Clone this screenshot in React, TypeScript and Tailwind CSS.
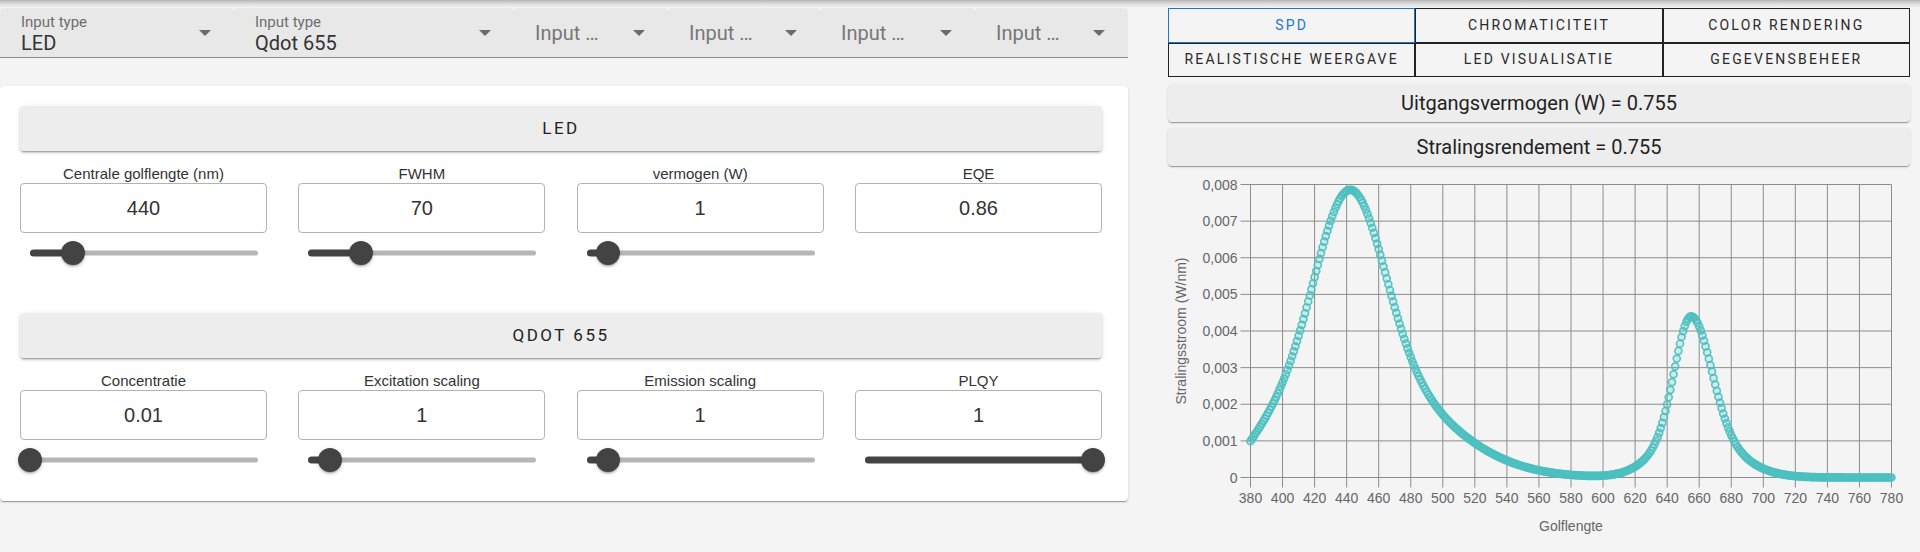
import React from 'react';

const selects = [
  { w: 'w-[234px]', label: 'Input type', value: 'LED' },
  { w: 'w-[280px]', label: 'Input type', value: 'Qdot 655' },
  { w: 'w-[154px]' },
  { w: 'w-[152px]' },
  { w: 'w-[155px]' },
  { w: 'w-[153px]' },
];

const tabs = ['SPD', 'CHROMATICITEIT', 'COLOR RENDERING', 'REALISTISCHE WEERGAVE', 'LED VISUALISATIE', 'GEGEVENSBEHEER'];

interface Field {
  label: string;
  value: string;
  slider?: number;
}

const ledFields: Field[] = [
  { label: 'Centrale golflengte (nm)', value: '440', slider: 19 },
  { label: 'FWHM', value: '70', slider: 23 },
  { label: 'vermogen (W)', value: '1', slider: 9.5 },
  { label: 'EQE', value: '0.86' },
];

const qdotFields: Field[] = [
  { label: 'Concentratie', value: '0.01', slider: 0 },
  { label: 'Excitation scaling', value: '1', slider: 9.6 },
  { label: 'Emission scaling', value: '1', slider: 9.5 },
  { label: 'PLQY', value: '1', slider: 100 },
];

function Arrow() {
  return (
    <svg width="12" height="6" viewBox="0 0 12 6" className="shrink-0">
      <path d="M0 0 L12 0 L6 6 Z" fill="#6b6b6b" />
    </svg>
  );
}

function Slider({ pct }: { pct: number }) {
  return (
    <div className="relative ml-[10px] w-[228px] h-[24px]">
      <div className="absolute left-0 right-0 top-1/2 -translate-y-1/2 h-[5px] rounded-full bg-[#b6b6b6]" />
      <div
        className="absolute left-0 top-1/2 -translate-y-1/2 h-[7px] rounded-full bg-[#434343]"
        style={{ width: `${pct}%` }}
      />
      <div
        className="absolute top-1/2 w-[24px] h-[24px] -translate-x-1/2 -translate-y-1/2 rounded-full bg-[#434343] shadow-[0_3px_1px_-2px_rgba(0,0,0,0.2),0_2px_2px_0_rgba(0,0,0,0.14),0_1px_5px_0_rgba(0,0,0,0.12)]"
        style={{ left: `${pct}%` }}
      />
    </div>
  );
}

function Section({ title, fields }: { title: string; fields: Field[] }) {
  return (
    <div>
      <div className="h-[45px] flex items-center justify-center rounded-[4px] bg-[#ededed] shadow-[0_3px_1px_-2px_rgba(0,0,0,0.2),0_2px_2px_0_rgba(0,0,0,0.14),0_1px_5px_0_rgba(0,0,0,0.12)] font-['Roboto'] text-[17px] tracking-[2.5px] text-[#222]">
        {title}
      </div>
      <div className="flex justify-between mt-[13.5px]">
        {fields.map((f) => (
          <div key={f.label} className="w-[247px]">
            <div className="text-center text-[15px] leading-[17px] text-[#333] font-['Liberation_Sans',Arial,sans-serif]">
              {f.label}
            </div>
            <input
              readOnly
              value={f.value}
              className="mt-[1.5px] w-[247px] h-[50px] border border-[#b3b3b3] rounded-[4px] bg-white text-center text-[20px] text-[#333] font-['Liberation_Sans',Arial,sans-serif] outline-none"
            />
            <div className="mt-[8px] h-[24px]">{f.slider !== undefined && <Slider pct={f.slider} />}</div>
          </div>
        ))}
      </div>
    </div>
  );
}

// spectrum chart
const L = 82.5;
const R = 723.5;
const T = 18.5;
const B = 311.5;
const xs = (l: number) => L + ((l - 380) / 400) * (R - L);
const ys = (v: number) => B - (v / 0.008) * (B - T);

function spd(l: number) {
  const d = l - 442;
  const led =
    0.0079 *
    (0.6 * Math.exp((-d * d) / (2 * 21 * 21)) + 0.4 * Math.exp((-d * d) / (2 * 50 * 50))) *
    (1 - 0.35 * Math.exp(-(l - 380) / 15));
  let q = l - 655;
  if (q > 0) q *= 0.82;
  const qd = 0.0044 * (0.7 * Math.exp((-q * q) / (2 * 10 * 10)) + 0.3 * Math.exp((-q * q) / (2 * 20 * 20)));
  return led + qd;
}

const points = Array.from({ length: 401 }, (_, i) => 380 + i);
const xTicks = Array.from({ length: 21 }, (_, i) => 380 + i * 20);
const yTicks = Array.from({ length: 9 }, (_, i) => i);

function Chart() {
  return (
    <svg width="742" height="386" className="block font-['Liberation_Sans',Arial,sans-serif]">
      {xTicks.map((t) => (
        <line key={'x' + t} x1={xs(t)} x2={xs(t)} y1={T} y2={B + 10} stroke="#8c8c8c" strokeWidth="1" />
      ))}
      {yTicks.map((t) => (
        <line key={'y' + t} x1={L - 10} x2={R} y1={ys(t / 1000)} y2={ys(t / 1000)} stroke="#8c8c8c" strokeWidth="1" />
      ))}
      {yTicks.map((t) => (
        <text
          key={'yl' + t}
          x={L - 13}
          y={ys(t / 1000)}
          textAnchor="end"
          dominantBaseline="central"
          fontSize="14"
          fill="#666"
        >
          {t === 0 ? '0' : `0,00${t}`}
        </text>
      ))}
      {xTicks.map((t) => (
        <text key={'xl' + t} x={xs(t)} y={332} textAnchor="middle" dominantBaseline="central" fontSize="14" fill="#666">
          {t}
        </text>
      ))}
      <text
        transform="rotate(-90)"
        x={-165}
        y={13}
        textAnchor="middle"
        dominantBaseline="central"
        fontSize="14"
        fill="#666"
      >
        Stralingsstroom (W/nm)
      </text>
      <text x={(L + R) / 2} y={359.5} textAnchor="middle" dominantBaseline="central" fontSize="14" fill="#666">
        Golflengte
      </text>
      {points.map((l) => (
        <circle
          key={l}
          cx={xs(l)}
          cy={ys(spd(l))}
          r="3.5"
          fill="rgba(75,192,192,0.2)"
          stroke="rgba(75,192,192,0.9)"
          strokeWidth="1.7"
        />
      ))}
    </svg>
  );
}

export default function App() {
  return (
    <div className="w-[1920px] h-[552px] overflow-hidden bg-[#f4f4f4] font-['Roboto']">
      <div className="h-[8px] bg-linear-to-b from-[#b5b5b5] via-[#dedede] to-[#f4f4f4]" />
      <div className="flex gap-[40px] pr-[10px]">
        {/* left column */}
        <div className="w-[1128px]">
          <div className="flex">
            {selects.map((s, i) => (
              <div
                key={i}
                className={`${s.w} h-[50px] flex items-center justify-between pl-[21px] pr-[23px] bg-[#e8e8e8] rounded-t-[4px] border-b border-[#8c8c8c]`}
              >
                {s.value ? (
                  <div className="self-start pt-[6px]">
                    <div className="text-[15px] leading-[16px] text-[#6e6e6e]">{s.label}</div>
                    <div className="mt-[2px] text-[20px] leading-[22px] text-[#333]">{s.value}</div>
                  </div>
                ) : (
                  <div className="text-[20px] text-[#777] whitespace-nowrap">Input …</div>
                )}
                <Arrow />
              </div>
            ))}
          </div>

          <div className="mt-[28px] h-[415px] bg-white rounded-[4px] pl-[20px] pr-[26px] pt-[20px] shadow-[0_2px_1px_-1px_rgba(0,0,0,0.2),0_1px_1px_0_rgba(0,0,0,0.14),0_1px_3px_0_rgba(0,0,0,0.12)]">
            <Section title="LED" fields={ledFields} />
            <div className="mt-[48px]">
              <Section title="QDOT 655" fields={qdotFields} />
            </div>
          </div>
        </div>

        {/* right column */}
        <div className="w-[742px]">
          <div className="grid grid-cols-3">
            {tabs.map((t, i) => (
              <div
                key={t}
                className={`h-[34.5px] flex items-center justify-center border text-[14px] tracking-[2.2px] whitespace-nowrap ${
                  i === 0 ? 'border-[#1976d2] text-[#1976d2]' : 'border-[#222] text-[#2a2a2a]'
                }`}
              >
                {t}
              </div>
            ))}
          </div>
          <div className="mt-[7px] h-[38px] flex items-center justify-center rounded-[4px] bg-[#ededed] text-[20px] text-[#222] shadow-[0_2px_1px_-1px_rgba(0,0,0,0.2),0_1px_1px_0_rgba(0,0,0,0.14),0_1px_3px_0_rgba(0,0,0,0.12)]">
            Uitgangsvermogen (W) = 0.755
          </div>
          <div className="mt-[6px] h-[38px] flex items-center justify-center rounded-[4px] bg-[#ededed] text-[20px] text-[#222] shadow-[0_2px_1px_-1px_rgba(0,0,0,0.2),0_1px_1px_0_rgba(0,0,0,0.14),0_1px_3px_0_rgba(0,0,0,0.12)]">
            Stralingsrendement = 0.755
          </div>
          <Chart />
        </div>
      </div>
    </div>
  );
}
